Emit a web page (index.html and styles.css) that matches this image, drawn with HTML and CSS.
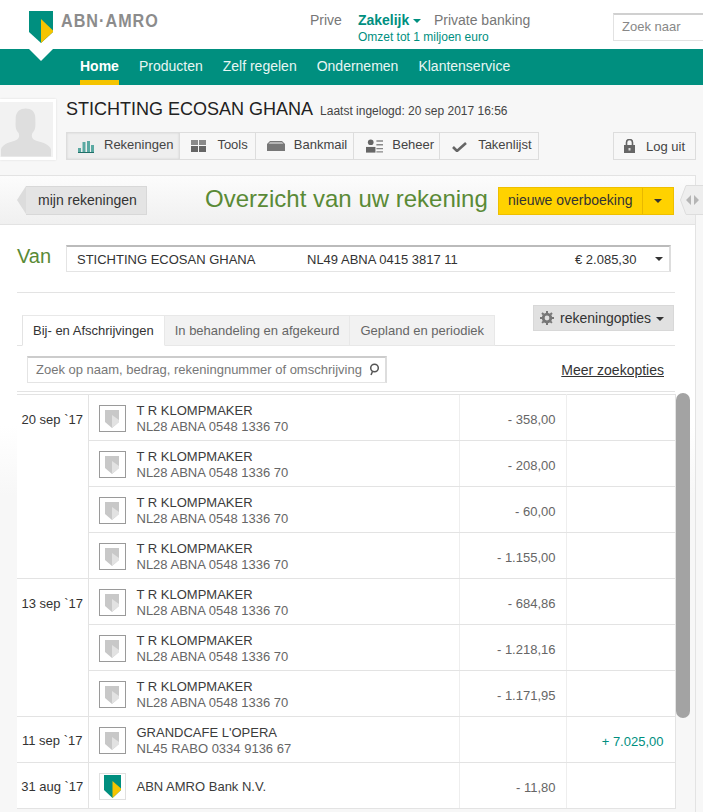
FILE: index.html
```html
<!DOCTYPE html>
<html lang="nl">
<head>
<meta charset="utf-8">
<title>ABN AMRO</title>
<link rel="stylesheet" href="styles.css">
</head>
<body>
<header class="top">
  <div class="logo">
    <svg class="shield" width="24" height="32" viewBox="0 0 24 32"><path d="M0 0H24V21L12 32L0 21Z" fill="#008f7f"/><path d="M12 8L24 19.500L24 21L12 32Z" fill="#f5c400"/></svg>
    <span class="wordmark">ABN·AMRO</span>
  </div>
  <nav class="segments">
    <span class="seg">Prive</span>
    <div class="seg-active"><span class="seg-name">Zakelijk <i class="caret teal"></i></span><span class="seg-sub">Omzet tot 1 miljoen euro</span></div>
    <span class="seg">Private banking</span>
  </nav>
  <div class="top-search">Zoek naar</div>
</header>
<nav class="mainnav">
  <svg class="notch" width="24" height="13" viewBox="0 0 24 13"><path d="M0 0H24L12 12Z" fill="#fff"/></svg>
  <a class="navitem active">Home</a><a class="navitem">Producten</a><a class="navitem">Zelf regelen</a><a class="navitem">Ondernemen</a><a class="navitem">Klantenservice</a>
</nav>
<section class="userbar">
  <div class="avatar"><svg width="53" height="54" viewBox="0 0 53 54"><path d="M1 54V47C2 42 8 40 15 38C20 36 20 33 19 30C15 26 16 22 16 15C16 8 21 5 26 5C32 5 36 8 36 15C36 22 37 26 33 30C32 33 32 36 37 38C44 40 51 42 52 47V54Z" fill="#dedede"/></svg></div>
  <div class="usermain">
    <div class="userline"><h1 class="username">STICHTING ECOSAN GHANA</h1><span class="lastlogin">Laatst ingelogd: 20 sep 2017 16:56</span></div>
    <div class="toolbar-row">
      <div class="toolbar">
        <a class="tool current"><svg width="16" height="13" viewBox="0 0 16 13"><path d="M0 12h3V8H0zM4.500 12h3V2h-3zM9 12h3V1H9zM13 12h3V5h-3z" fill="#5aa9a2"/><path d="M0 12h16v1H0z" fill="#1f6f68"/></svg>Rekeningen</a>
        <a class="tool tool-tools"><svg width="15" height="12" viewBox="0 0 15 12"><path d="M0 0h7v5H0zM8 0h7v5H8z" fill="#8a8a8a"/><path d="M0 6h7v6H0zM8 6h7v6H8z" fill="#666"/></svg>Tools</a>
        <a class="tool tool-mail"><svg width="18" height="10" viewBox="0 0 18 10"><path d="M3 0h12l3 3v7H0V3z" fill="#777"/><path d="M3 1h12l1.500 2h-15z" fill="#b5b5b5"/></svg>Bankmail</a>
        <a class="tool tool-beheer"><svg width="17" height="14" viewBox="0 0 18 14"><circle cx="5" cy="3" r="3" fill="#666"/><path d="M0 14V8h10v6z" fill="#666"/><path d="M11 1h7v1.500h-7zM11 5h7v1.500h-7zM11 9h7v1.500h-7zM11 12.500h7V14h-7z" fill="#888"/></svg>Beheer</a>
        <a class="tool tool-taken"><svg width="15" height="11" viewBox="0 0 15 11"><path d="M1 6l4 4 9-8" fill="none" stroke="#666" stroke-width="2.600"/></svg>Takenlijst</a>
      </div>
      <a class="logout"><svg width="11" height="14" viewBox="0 0 11 14"><path d="M0 6h11v8H0z" fill="#666"/><path d="M2.500 6V3.500a3 3 0 0 1 6 0V6" fill="none" stroke="#666" stroke-width="1.600"/><path d="M4.500 9h2v2.500h-2z" fill="#ddd"/></svg>Log uit</a>
    </div>
  </div>
</section>
<main class="panel">
  <div class="strip">
    <a class="back">mijn rekeningen</a>
    <h2 class="pagetitle">Overzicht van uw rekening</h2>
    <div class="cta"><span class="cta-label">nieuwe overboeking</span><span class="cta-arrow"><i class="caret dark"></i></span></div>
    <svg class="expander" width="24" height="30" viewBox="0 0 24 30"><path d="M6 .5H24V29.500H6L.5 15Z" fill="#eee" stroke="#ddd"/><path d="M11 10l-5 5 5 5zM14 10l5 5-5 5z" fill="#b5b5b5"/></svg>
  </div>
  <div class="body">
    <div class="van"><span class="van-label">Van</span>
      <div class="account"><span class="acc-name">STICHTING ECOSAN GHANA</span><span class="acc-nr">NL49 ABNA 0415 3817 11</span><span class="acc-bal">€ 2.085,30</span><i class="caret dark"></i></div>
    </div>
    <div class="tabhead">
      <div class="tabs"><a class="tab on">Bij- en Afschrijvingen</a><a class="tab">In behandeling en afgekeurd</a><a class="tab">Gepland en periodiek</a></div>
      <a class="options"><svg width="14" height="14" viewBox="0 0 14 14"><circle cx="7" cy="7" r="3.800" fill="none" stroke="#777" stroke-width="2.800"/><path d="M7 0v14M0 7h14M2 2l10 10M12 2L2 12" stroke="#777" stroke-width="2" stroke-dasharray="2.200 9.600 2.200"/></svg>rekeningopties <i class="caret dark"></i></a>
    </div>
    <div class="searchrow">
      <div class="txsearch"><span class="ph">Zoek op naam, bedrag, rekeningnummer of omschrijving</span><svg width="12" height="13" viewBox="0 0 12 13"><circle cx="6.500" cy="5" r="3.800" fill="none" stroke="#555" stroke-width="1.500"/><path d="M4.500 8.500L3 12" stroke="#555" stroke-width="1.500"/></svg></div>
      <a class="more">Meer zoekopties</a>
    </div>
    <div class="listwrap">
      <table class="tx">
        <colgroup><col class="c-date"><col class="c-main"><col class="c-deb"><col class="c-cred"></colgroup>
        <tbody>
          <tr><td class="date top-date" rowspan="4">20 sep `17</td><td class="who"><div class="who-in"><span class="ico"><svg width="14" height="18" viewBox="0 0 14 18"><path d="M0 0H14V12L7 18L0 12Z" fill="#c8c8c8"/><path d="M7 5L14 10V12L7 18Z" fill="#e2e2e2"/></svg></span><div><div class="nm">T R KLOMPMAKER</div><div class="ib">NL28 ABNA 0548 1336 70</div></div></div></td><td class="amt">- 358,00</td><td></td></tr>
          <tr><td class="who"><div class="who-in"><span class="ico"><svg width="14" height="18" viewBox="0 0 14 18"><path d="M0 0H14V12L7 18L0 12Z" fill="#c8c8c8"/><path d="M7 5L14 10V12L7 18Z" fill="#e2e2e2"/></svg></span><div><div class="nm">T R KLOMPMAKER</div><div class="ib">NL28 ABNA 0548 1336 70</div></div></div></td><td class="amt">- 208,00</td><td></td></tr>
          <tr><td class="who"><div class="who-in"><span class="ico"><svg width="14" height="18" viewBox="0 0 14 18"><path d="M0 0H14V12L7 18L0 12Z" fill="#c8c8c8"/><path d="M7 5L14 10V12L7 18Z" fill="#e2e2e2"/></svg></span><div><div class="nm">T R KLOMPMAKER</div><div class="ib">NL28 ABNA 0548 1336 70</div></div></div></td><td class="amt">- 60,00</td><td></td></tr>
          <tr><td class="who"><div class="who-in"><span class="ico"><svg width="14" height="18" viewBox="0 0 14 18"><path d="M0 0H14V12L7 18L0 12Z" fill="#c8c8c8"/><path d="M7 5L14 10V12L7 18Z" fill="#e2e2e2"/></svg></span><div><div class="nm">T R KLOMPMAKER</div><div class="ib">NL28 ABNA 0548 1336 70</div></div></div></td><td class="amt">- 1.155,00</td><td></td></tr>
          <tr><td class="date top-date" rowspan="3">13 sep `17</td><td class="who"><div class="who-in"><span class="ico"><svg width="14" height="18" viewBox="0 0 14 18"><path d="M0 0H14V12L7 18L0 12Z" fill="#c8c8c8"/><path d="M7 5L14 10V12L7 18Z" fill="#e2e2e2"/></svg></span><div><div class="nm">T R KLOMPMAKER</div><div class="ib">NL28 ABNA 0548 1336 70</div></div></div></td><td class="amt">- 684,86</td><td></td></tr>
          <tr><td class="who"><div class="who-in"><span class="ico"><svg width="14" height="18" viewBox="0 0 14 18"><path d="M0 0H14V12L7 18L0 12Z" fill="#c8c8c8"/><path d="M7 5L14 10V12L7 18Z" fill="#e2e2e2"/></svg></span><div><div class="nm">T R KLOMPMAKER</div><div class="ib">NL28 ABNA 0548 1336 70</div></div></div></td><td class="amt">- 1.218,16</td><td></td></tr>
          <tr><td class="who"><div class="who-in"><span class="ico"><svg width="14" height="18" viewBox="0 0 14 18"><path d="M0 0H14V12L7 18L0 12Z" fill="#c8c8c8"/><path d="M7 5L14 10V12L7 18Z" fill="#e2e2e2"/></svg></span><div><div class="nm">T R KLOMPMAKER</div><div class="ib">NL28 ABNA 0548 1336 70</div></div></div></td><td class="amt">- 1.171,95</td><td></td></tr>
          <tr><td class="date">11 sep `17</td><td class="who"><div class="who-in"><span class="ico"><svg width="14" height="18" viewBox="0 0 14 18"><path d="M0 0H14V12L7 18L0 12Z" fill="#c8c8c8"/><path d="M7 5L14 10V12L7 18Z" fill="#e2e2e2"/></svg></span><div><div class="nm">GRANDCAFE L'OPERA</div><div class="ib">NL45 RABO 0334 9136 67</div></div></div></td><td class="amt"></td><td class="amt plus">+ 7.025,00</td></tr>
          <tr><td class="date">31 aug `17</td><td class="who"><div class="who-in"><span class="ico light"><svg width="17" height="23" viewBox="0 0 17 23"><path d="M0 0H17V15L8.500 23L0 15Z" fill="#008f7f"/><path d="M8.500 6L17 13.500V15L8.500 23Z" fill="#f5c400"/></svg></span><div><div class="nm single">ABN AMRO Bank N.V.</div></div></div></td><td class="amt">- 11,80</td><td></td></tr>
        </tbody>
      </table>
      <div class="scrollthumb"></div>
    </div>
  </div>
</main>
</body>
</html>
```

FILE: styles.css
```css
* { box-sizing: border-box; }
html, body { margin: 0; height: 812px; overflow: hidden; }
body { background: #f7f7f7; font-family: "Liberation Sans", Arial, sans-serif; font-size: 13px; color: #333; }
h1, h2 { margin: 0; font-weight: normal; }
.caret { display: inline-block; width: 0; height: 0; border-left: 4px solid transparent; border-right: 4px solid transparent; border-top: 4px solid #333; }
.caret.teal { border-top-color: #008f7f; vertical-align: 2px; }
.caret.dark { border-top-color: #333; }

.top { height: 49px; background: #fff; display: flex; position: relative; }
.logo { width: 310px; padding: 11px 0 0 29px; display: flex; align-items: flex-start; }
.shield { display: block; }
.wordmark { margin-left: 8px; font-size: 19px; font-weight: bold; letter-spacing: 1.200px; color: #8c8c8c; line-height: 20px; white-space: nowrap; transform: scaleX(.85); transform-origin: left center; }
.segments { display: flex; gap: 16px; padding-top: 12px; align-items: flex-start; font-size: 14px; }
.seg { color: #777; line-height: 16px; }
.seg-active { display: flex; flex-direction: column; width: 60px; white-space: nowrap; }
.seg-name { font-weight: bold; color: #008f7f; line-height: 16px; }
.seg-sub { font-size: 12px; color: #008f7f; line-height: 16px; margin-top: 1px; }
.top-search { position: absolute; left: 613px; top: 13px; width: 90px; height: 28px; border: 1px solid #e2e2e2; border-top: 2px solid #d0d0d0; border-right: 0; font-size: 13px; color: #888; padding: 4px 0 0 8px; background: #fff; }

.mainnav { height: 36px; background: #008f7f; display: flex; padding-left: 80px; gap: 20px; position: relative; }
.notch { position: absolute; left: 29px; top: 0; }
.navitem { color: #e8f6f4; font-size: 14px; line-height: 34px; height: 36px; }
.navitem.active { color: #fff; font-weight: bold; border-bottom: 5px solid #f5c400; }

.userbar { height: 90px; display: flex; padding-top: 14px; }
.avatar { width: 56px; height: 61px; background: #f2f2f2; border: 3px solid #fff; border-left: 0; box-shadow: 0 0 2px #ddd; display: flex; align-items: flex-end; justify-content: flex-end; padding-right: 1px; }
.usermain { margin-left: 10px; width: 630px; }
.userline { display: flex; align-items: baseline; gap: 7px; height: 19px; margin-top: 1px; }
.username { font-size: 18px; color: #222; line-height: 19px; white-space: nowrap; }
.lastlogin { font-size: 12px; color: #444; white-space: nowrap; }
.toolbar-row { display: flex; justify-content: space-between; margin-top: 13px; }
.toolbar { display: flex; height: 28px; border: 1px solid #ddd; background: #f7f7f7; }
.tool { display: flex; align-items: center; gap: 10px; padding: 0 6px 2px 11px; border-right: 1px solid #ddd; color: #444; font-size: 13px; line-height: 24px; white-space: nowrap; }
.tool svg { margin-top: 2px; }
.tool-tools { gap: 11px; padding-right: 7px; }
.tool-mail { gap: 9px; }
.tool-beheer { gap: 9px; padding-left: 12px; padding-right: 5px; }
.tool-taken { gap: 11px; padding-left: 12px; border-right: 0; }
.tool.current { background: #eee; box-shadow: inset 0 0 2px #ccc; }
.logout { display: flex; align-items: center; gap: 11px; width: 83px; height: 28px; border: 1px solid #ddd; padding-left: 10px; color: #444; font-size: 13px; }

.panel { background: linear-gradient(#fff 0, #fff 250px, #f7f7f7 320px); width: 696px; height: 637px; border-top: 1px solid #e3e3e3; border-right: 1px solid #e3e3e3; }
.strip { height: 49px; background: linear-gradient(#fcfcfc, #f0f0f0); border-bottom: 1px solid #e3e3e3; display: flex; align-items: center; padding-left: 17px; position: relative; }
.back { position: relative; margin-left: 9px; width: 121px; height: 29px; background: #e4e4e4; border: 1px solid #d8d8d8; border-left: 0; padding-left: 12px; line-height: 26px; font-size: 14px; color: #333; margin-top: 1px; white-space: nowrap; }
.back::before { content: ""; position: absolute; left: -9px; top: -1px; border-right: 9px solid #dcdcdc; border-top: 14.500px solid transparent; border-bottom: 14.500px solid transparent; }
.pagetitle { margin-left: 58px; margin-top: -2px; font-size: 24px; color: #5a8a36; white-space: nowrap; }
.cta { position: absolute; left: 498px; top: 11px; display: flex; width: 176px; height: 28px; background: #ffd200; border: 1px solid #eebf00; color: #333; }
.cta-label { width: 144px; padding-left: 9px; line-height: 24px; font-size: 14px; border-right: 1px solid #e8b800; white-space: nowrap; }
.cta-arrow { flex: 1; display: flex; align-items: center; justify-content: center; }
.expander { position: absolute; left: 680px; top: 9px; }

.body { padding: 0 20px 0 17px; height: 587px; overflow: hidden; }
.van { display: flex; height: 68px; border-bottom: 1px solid #e3e3e3; padding-top: 20px; }
.van-label { width: 49px; font-size: 20px; color: #5a8a36; line-height: 22px; }
.account { display: flex; align-items: center; width: 605px; height: 27px; flex: none; border: 1px solid #e4e4e4; border-top: 2px solid #bbb; border-right: 2px solid #ddd; background: #fff; padding-left: 10px; font-size: 13px; color: #333; white-space: nowrap; }
.acc-name { width: 230px; }
.acc-nr { width: 268px; }
.acc-bal { width: 80px; }

.tabhead { display: flex; height: 53px; justify-content: space-between; position: relative; border-bottom: 1px solid #e3e3e3; padding: 12px 1px 0 5px; }
.tabs { display: flex; align-self: flex-end; margin-bottom: -1px; }
.tab { height: 31px; line-height: 30px; padding: 0 10px; background: #f2f2f2; border: 1px solid #e8e8e8; border-left: 0; color: #666; font-size: 13px; white-space: nowrap; }
.tab.on { background: #fff; color: #333; border-left: 1px solid #e3e3e3; border-bottom-color: #fff; }
.options { display: flex; align-items: center; gap: 6px; width: 141px; height: 26px; background: #e1e1e1; border: 1px solid #d8d8d8; padding-left: 6px; font-size: 14px; color: #333; white-space: nowrap; }
.options .caret { margin-top: 2px; margin-left: -1px; }

.searchrow { height: 46px; background: #fff; display: flex; align-items: flex-start; justify-content: space-between; padding: 10px 11px 0 10px; border-bottom: 1px solid #e3e3e3; }
.txsearch { display: flex; align-items: center; justify-content: space-between; width: 360px; height: 27px; border: 1px solid #e4e4e4; border-top: 2px solid #ccc; border-right: 2px solid #ddd; padding: 0 5px 2px 8px; background: #fff; overflow: hidden; }
.ph { color: #777; font-size: 13px; white-space: nowrap; }
.more { font-size: 14px; color: #333; text-decoration: underline; margin-top: 6px; white-space: nowrap; }

.listwrap { position: relative; padding-top: 2px; width: 673px; height: 420px; }
.tx { border-collapse: collapse; table-layout: fixed; width: 658px; background: #fff; border-right: 1px solid #e3e3e3; }
.c-date { width: 71px; }
.c-main { width: 371px; }
.c-deb { width: 107px; }
.c-cred { width: 109px; }
.tx td { height: 46px; padding: 2px 0 0; border-bottom: 1px solid #e3e3e3; font-size: 13px; vertical-align: middle; }
.tx tr:first-child td { border-top: 1px solid #e3e3e3; }
.date { white-space: nowrap; text-align: center; color: #333; background: #fff; }
.date.top-date { vertical-align: top !important; padding-top: 17px !important; }
.who { border-left: 1px solid #e3e3e3; }
.who-in { display: flex; align-items: center; padding-left: 10px; gap: 11px; }
.ico { width: 27px; height: 27px; border: 1px solid #9a9a9a; display: flex; align-items: center; justify-content: center; flex: none; background: #fff; }
.ico.light { border-color: #e0e0e0; }
.nm { color: #3c3c3c; line-height: 16px; white-space: nowrap; }
.nm.single { margin-top: 1px; }
.ib { color: #666; line-height: 16px; white-space: nowrap; }
.amt { text-align: right; padding-right: 10px !important; padding-top: 4px !important; color: #666; border-left: 1px solid #eee; border-right: 1px solid #eee; }
.plus { color: #008f7f; border-left: 0; border-right: 0; padding-right: 11px !important; }
.scrollthumb { position: absolute; left: 659px; top: 1px; width: 14px; height: 325px; background: #a3a3a3; border-radius: 7px; }
```
